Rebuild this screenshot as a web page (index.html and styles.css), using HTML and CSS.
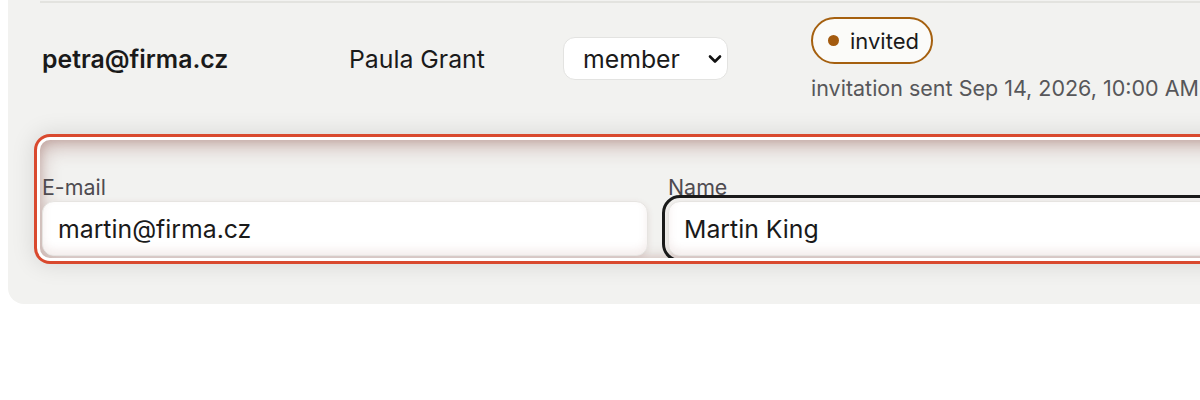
FILE: index.html
```html
<!DOCTYPE html>
<html lang="en">
<head>
<meta charset="utf-8">
<title>Members</title>
<link rel="stylesheet" href="styles.css">
</head>
<body>
<div class="card">
  <div class="row">
    <div class="c-email">petra@firma.cz</div>
    <div class="c-name">Paula Grant</div>
    <div class="c-role">
      <div class="select">
        <select aria-label="Role"><option>member</option><option>admin</option></select>
        <svg class="chev" viewBox="0 0 14 10" width="14" height="10" aria-hidden="true"><path d="M2 2.5 L7 7.5 L12 2.5" fill="none" stroke="#111" stroke-width="2.6" stroke-linecap="round" stroke-linejoin="round"/></svg>
      </div>
    </div>
    <div class="c-status">
      <span class="badge"><span class="dot"></span>invited</span>
      <div class="sent">invitation sent Sep 14, 2026, 10:00 AM</div>
    </div>
  </div>
  <form class="new-row">
    <label class="field f-email"><span class="lbl">E-mail</span><input type="email" value="martin@firma.cz"></label>
    <label class="field f-name"><span class="lbl">Name</span><input class="focused" type="text" value="Martin King"></label>
  </form>
</div>
</body>
</html>
```

FILE: styles.css
```css
html, body {
  margin: 0;
  padding: 0;
  background: #ffffff;
  overflow: hidden;
  font-family: Inter, "Noto Sans", sans-serif;
  color: #1a1a1a;
}

.card {
  width: 1400px;
  margin: -20px 0 0 8px;
  padding: 21px 0 46px 32px;
  background: #f2f2f0;
  border-radius: 16px;
}

.row {
  display: flex;
  align-items: center;
  border-top: 2px solid #e3e3df;
  padding: 14px 2px 14px 2px;
}

.c-email {
  width: 307px;
  font-size: 24.8px;
  font-weight: 600;
}

.c-name {
  width: 214px;
  font-size: 24.8px;
}

.c-role {
  width: 248px;
}

.select {
  position: relative;
  width: 165px;
  height: 43px;
  box-sizing: border-box;
}

.select select {
  appearance: none;
  -webkit-appearance: none;
  width: 100%;
  height: 100%;
  box-sizing: border-box;
  border: 1px solid #e3e3e1;
  border-radius: 12px;
  background: #ffffff;
  padding: 0 0 0 19px;
  font-family: inherit;
  font-size: 24.8px;
  color: #1a1a1a;
}

.chev {
  position: absolute;
  right: 6px;
  top: 17px;
  pointer-events: none;
}

.c-status {
  display: flex;
  flex-direction: column;
  align-items: flex-start;
}

.badge {
  display: inline-flex;
  align-items: center;
  gap: 11px;
  height: 47px;
  box-sizing: border-box;
  padding: 0 12px 0 15px;
  border: 2px solid #a5600f;
  border-radius: 999px;
  background: #fbfbf9;
  font-size: 22px;
  color: #1a1a1a;
}

.dot {
  width: 11px;
  height: 11px;
  border-radius: 50%;
  background: #a35a0e;
}

.sent {
  margin-top: 12px;
  font-size: 21.5px;
  line-height: 24px;
  color: #57575a;
  white-space: nowrap;
}

.new-row {
  display: flex;
  gap: 20px;
  margin: 26px 0 0 0;
  height: 118px;
  box-sizing: border-box;
  padding: 35px 2px 0 2px;
  border-radius: 10px;
  overflow: hidden;
  background: #f2f2f0;
  box-shadow:
    inset 0 6px 20px rgba(120, 50, 40, 0.34),
    inset 0 0 10px rgba(120, 50, 40, 0.18),
    0 0 0 3px #ffffff,
    0 0 0 6px #d9492e,
    0 0 22px 8px rgba(0, 0, 0, 0.10);
}

.field {
  display: flex;
  flex-direction: column;
  gap: 2px;
}

.f-email {
  width: 606px;
}

.f-name {
  flex: 1;
}

.lbl {
  font-size: 21.4px;
  line-height: 24px;
  color: #4e4b50;
}

.field input {
  height: 55px;
  box-sizing: border-box;
  border: 1px solid #e6e4e1;
  border-radius: 12px;
  background: #ffffff;
  padding: 0 15px;
  font-family: inherit;
  font-size: 24.8px;
  color: #1a1a1a;
  box-shadow: inset 0 -5px 9px rgba(150, 80, 70, 0.10), 0 2px 6px rgba(120, 60, 50, 0.12);
}

.field input.focused {
  outline: 3px solid #1a1a1a;
  outline-offset: 3px;
}
```
